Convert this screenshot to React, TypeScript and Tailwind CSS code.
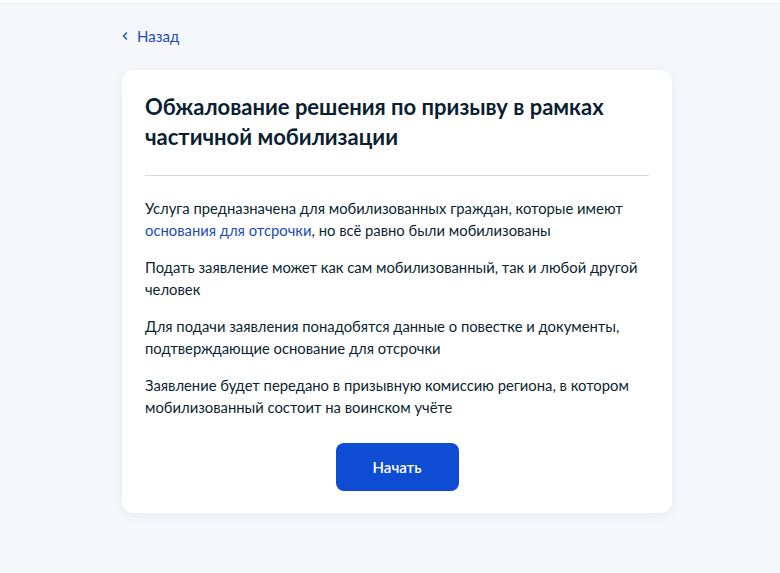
import { ChevronLeft } from 'lucide-react';

const paragraphs = [
  'Подать заявление может как сам мобилизованный, так и любой другой человек',
  'Для подачи заявления понадобятся данные о повестке и документы, подтверждающие основание для отсрочки',
  'Заявление будет передано в призывную комиссию региона, в котором мобилизованный состоит на воинском учёте',
];

export default function App() {
  return (
    <div className="min-h-[573px] bg-[#f5f7fb] font-['Lato','Liberation_Sans',sans-serif] text-[#0b1f33]">
      {/* Header strip */}
      <div className="h-[4px] bg-white border-b border-[#e9edf3]"></div>

      <div className="w-[550px] ml-[122px]">
        {/* Back link */}
        <div className="h-[66px] flex items-center pb-[2px]">
          <a className="flex items-center gap-[6px] text-[15px] text-[#1d4cb8] cursor-pointer">
            <ChevronLeft className="w-[12px] h-[12px] -ml-[3px]" strokeWidth={3} />
            <span>Назад</span>
          </a>
        </div>

        {/* Card */}
        <div className="bg-white rounded-[12px] shadow-[0_2px_12px_rgba(11,31,51,0.06)] px-[23px] pt-[22px] pb-[22px]">
          <h1 className="text-[22px] leading-[30px] font-bold pr-[20px]">
            Обжалование решения по призыву в рамках частичной мобилизации
          </h1>
          <div className="h-px bg-[#d3d8e3] mt-[23px] mb-[21px]"></div>

          <div className="flex flex-col gap-[15px] text-[14.8px] leading-[22px]">
            <p>
              Услуга предназначена для мобилизованных граждан, которые имеют{' '}
              <a className="text-[#1d4cb8] cursor-pointer">основания для отсрочки</a>, но всё равно были
              мобилизованы
            </p>
            {paragraphs.map((t) => (
              <p key={t}>{t}</p>
            ))}
          </div>

          <div className="flex justify-center mt-[25px]">
            <button className="w-[123px] h-[48px] rounded-[8px] bg-[#0d4cd3] text-white text-[15px] font-semibold">
              Начать
            </button>
          </div>
        </div>
      </div>
    </div>
  );
}
